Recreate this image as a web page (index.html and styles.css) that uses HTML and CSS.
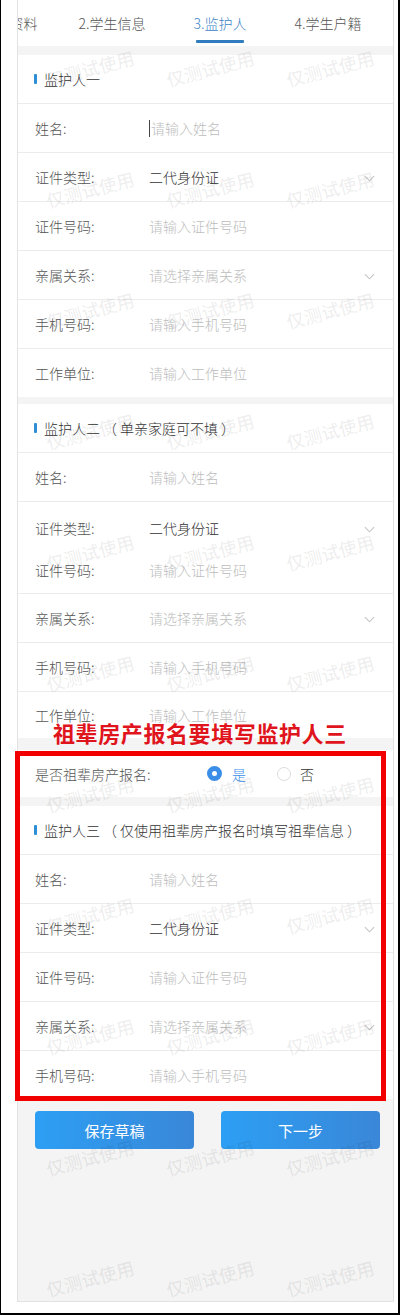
FILE: index.html
```html
<!DOCTYPE html>
<html lang="zh-CN">
<head>
<meta charset="utf-8">
<title>监护人</title>
<link rel="stylesheet" href="styles.css">
</head>
<body>
<div class="page">
  <div class="frame">
    <div class="tabs">
      <div class="tabs-inner">
        <div class="tab">1.基本资料</div>
        <div class="tab">2.学生信息</div>
        <div class="tab active">3.监护人</div>
        <div class="tab">4.学生户籍</div>
      </div>
    </div>

    <section class="card card-1">
      <div class="title"><span class="bar"></span>监护人一</div>
      <div class="row"><span class="label">姓名:</span><span class="value ph"><span class="caret"></span>请输入姓名</span></div>
      <div class="row"><span class="label">证件类型:</span><span class="value">二代身份证</span><svg class="chev" viewBox="0 0 12 7"><path d="M1 1l5 5 5-5"/></svg></div>
      <div class="row"><span class="label">证件号码:</span><span class="value ph">请输入证件号码</span></div>
      <div class="row"><span class="label">亲属关系:</span><span class="value ph">请选择亲属关系</span><svg class="chev" viewBox="0 0 12 7"><path d="M1 1l5 5 5-5"/></svg></div>
      <div class="row"><span class="label">手机号码:</span><span class="value ph">请输入手机号码</span></div>
      <div class="row"><span class="label">工作单位:</span><span class="value ph">请输入工作单位</span></div>
    </section>

    <section class="card card-2">
      <div class="title"><span class="bar"></span>监护人二<span class="paren">（</span>单亲家庭可不填<span class="paren">）</span></div>
      <div class="row"><span class="label">姓名:</span><span class="value ph">请输入姓名</span></div>
      <div class="row row-double">
        <div class="sub sub-a"><span class="label">证件类型:</span><span class="value">二代身份证</span><svg class="chev" viewBox="0 0 12 7"><path d="M1 1l5 5 5-5"/></svg></div>
        <div class="sub sub-b"><span class="label">证件号码:</span><span class="value ph">请输入证件号码</span></div>
      </div>
      <div class="row"><span class="label">亲属关系:</span><span class="value ph">请选择亲属关系</span><svg class="chev" viewBox="0 0 12 7"><path d="M1 1l5 5 5-5"/></svg></div>
      <div class="row"><span class="label">手机号码:</span><span class="value ph">请输入手机号码</span></div>
      <div class="row row-short"><span class="label">工作单位:</span><span class="value ph">请输入工作单位</span></div>
    </section>

    <section class="card card-3">
      <div class="radio-row">
        <span class="label label-wide">是否祖辈房产报名:</span>
        <span class="radio on"></span><span class="opt opt-on">是</span>
        <span class="radio"></span><span class="opt">否</span>
      </div>
    </section>

    <section class="card card-4">
      <div class="title"><span class="bar"></span>监护人三<span class="paren">（</span>仅使用祖辈房产报名时填写祖辈信息<span class="paren">）</span></div>
      <div class="row"><span class="label">姓名:</span><span class="value ph">请输入姓名</span></div>
      <div class="row"><span class="label">证件类型:</span><span class="value">二代身份证</span><svg class="chev" viewBox="0 0 12 7"><path d="M1 1l5 5 5-5"/></svg></div>
      <div class="row"><span class="label">证件号码:</span><span class="value ph">请输入证件号码</span></div>
      <div class="row"><span class="label">亲属关系:</span><span class="value ph">请选择亲属关系</span><svg class="chev" viewBox="0 0 12 7"><path d="M1 1l5 5 5-5"/></svg></div>
      <div class="row"><span class="label">手机号码:</span><span class="value ph">请输入手机号码</span></div>
    </section>

    <div class="actions">
      <button class="btn" type="button">保存草稿</button>
      <button class="btn" type="button">下一步</button>
    </div>

    <div class="watermarks" aria-hidden="true">
      <span>仅测试使用</span><span>仅测试使用</span><span>仅测试使用</span>
      <span>仅测试使用</span><span>仅测试使用</span><span>仅测试使用</span>
      <span>仅测试使用</span><span>仅测试使用</span><span>仅测试使用</span>
      <span>仅测试使用</span><span>仅测试使用</span><span>仅测试使用</span>
      <span>仅测试使用</span><span>仅测试使用</span><span>仅测试使用</span>
      <span>仅测试使用</span><span>仅测试使用</span><span>仅测试使用</span>
      <span>仅测试使用</span><span>仅测试使用</span><span>仅测试使用</span>
      <span>仅测试使用</span><span>仅测试使用</span><span>仅测试使用</span>
      <span>仅测试使用</span><span>仅测试使用</span><span>仅测试使用</span>
      <span>仅测试使用</span><span>仅测试使用</span><span>仅测试使用</span>
      <span>仅测试使用</span><span>仅测试使用</span><span>仅测试使用</span>
    </div>
  </div>

  <div class="note">祖辈房产报名要填写监护人三</div>
  <div class="red-box"></div>
</div>
</body>
</html>
```

FILE: styles.css
```css
* { box-sizing: border-box; }

html, body {
  margin: 0;
  padding: 0;
  background: #fff;
}

body {
  font-family: "Noto Sans CJK SC", "Noto Sans", "Liberation Sans", sans-serif;
  font-size: 14px;
  font-weight: 300;
  color: #333;
}

.page {
  position: relative;
  width: 400px;
  height: 1315px;
  border-left: 1px solid #000;
  border-right: 2px solid #000;
  border-bottom: 2px solid #000;
  padding-left: 16px;
  background: #fff;
}

.frame {
  position: relative;
  width: 377px;
  height: 1302px;
  border: 1px solid #e2e2e2;
  border-top: none;
  background: #f4f4f4;
  overflow: hidden;
}

/* Tabs */
.tabs {
  height: 46px;
  background: #fff;
  overflow: hidden;
}

.tabs-inner {
  display: flex;
  margin-left: -68px;
}

.tab {
  position: relative;
  flex: 0 0 108px;
  height: 46px;
  line-height: 46px;
  text-align: center;
  font-size: 14px;
  color: #555;
  white-space: nowrap;
}

.tab.active {
  color: #3d84c6;
}

.tab.active::after {
  content: "";
  position: absolute;
  left: 50%;
  bottom: 3px;
  width: 48px;
  height: 3px;
  margin-left: -24px;
  background: #2f7cbf;
  border-radius: 1px;
}

/* Cards */
.card {
  background: #fff;
}

.card-1 { margin-top: 9px; }
.card-2 { margin-top: 7px; }
.card-3 { margin-top: 12px; }
.card-4 { margin-top: 9px; }

.title {
  display: flex;
  align-items: center;
  height: 48px;
  padding-left: 16px;
  font-size: 14px;
  color: #333;
  white-space: nowrap;
}

.paren {
  padding: 0 3px;
}

.bar {
  width: 3px;
  height: 10px;
  margin-right: 7px;
  background: #2f8fd6;
  border-radius: 1px;
}

.row {
  display: flex;
  align-items: center;
  height: 49px;
  padding: 0 17px;
  border-top: 1px solid #ececec;
}

.row-short { height: 47px; }

.row-double {
  display: block;
  height: 92px;
  padding-top: 4px;
}

.sub {
  display: flex;
  align-items: center;
}

.sub-a { height: 43px; }
.sub-b { height: 42px; }

.label {
  flex: 0 0 114px;
  color: #555;
  font-size: 14px;
  white-space: nowrap;
}

.value {
  flex: 1;
  display: flex;
  align-items: center;
  color: #333;
  font-size: 14px;
  white-space: nowrap;
}

.value.ph {
  color: #bdbdbd;
}

.caret {
  width: 1px;
  height: 17px;
  background: #444;
  margin-right: 1px;
}

.chev {
  width: 11px;
  height: 7px;
  margin-top: 3px;
  margin-right: 1px;
  fill: none;
  stroke: #c4c4c4;
  stroke-width: 1.2;
}

/* Radio */
.radio-row {
  display: flex;
  align-items: center;
  height: 47px;
  padding: 0 17px;
}

.label-wide {
  flex: 0 0 172px;
}

.radio {
  width: 14px;
  height: 14px;
  border-radius: 50%;
  border: 1px solid #dcdcdc;
  background: #fff;
  margin-right: 9px;
}

.radio.on {
  width: 15px;
  height: 15px;
  border: 5px solid #3b8ee8;
  background: #fff;
  margin-right: 10px;
}

.opt {
  font-size: 14px;
  color: #333;
  margin-right: 31px;
}

.opt-on {
  color: #3b8ee8;
}

/* Buttons */
.actions {
  display: grid;
  grid-template-columns: 1fr 1fr;
  column-gap: 27px;
  padding: 12px 13px 0 17px;
}

.btn {
  height: 38px;
  border: none;
  border-radius: 4px;
  background: linear-gradient(to right, #2c9ff4, #3a87d8);
  color: #fff;
  font-family: inherit;
  font-size: 15px;
  font-weight: 400;
  padding: 0;
}

/* Watermark overlay */
.watermarks {
  position: absolute;
  top: 0;
  left: 0;
  right: 0;
  bottom: 0;
  display: grid;
  grid-template-columns: repeat(3, 120px);
  grid-auto-rows: 121px;
  padding: 7px 0 0 12px;
  pointer-events: none;
}

.watermarks span {
  justify-self: center;
  align-self: center;
  transform: rotate(-15deg);
  font-size: 18px;
  font-weight: 500;
  color: rgba(0, 0, 0, 0.075);
  white-space: nowrap;
}

/* Annotation overlays */
.note {
  position: absolute;
  top: 717px;
  left: 52px;
  font-size: 22px;
  line-height: 30px;
  font-weight: 700;
  letter-spacing: 0.6px;
  color: #e0141c;
  white-space: nowrap;
}

.red-box {
  position: absolute;
  top: 751px;
  left: 14px;
  width: 371px;
  height: 350px;
  border: 5px solid #f20000;
  pointer-events: none;
}
```
